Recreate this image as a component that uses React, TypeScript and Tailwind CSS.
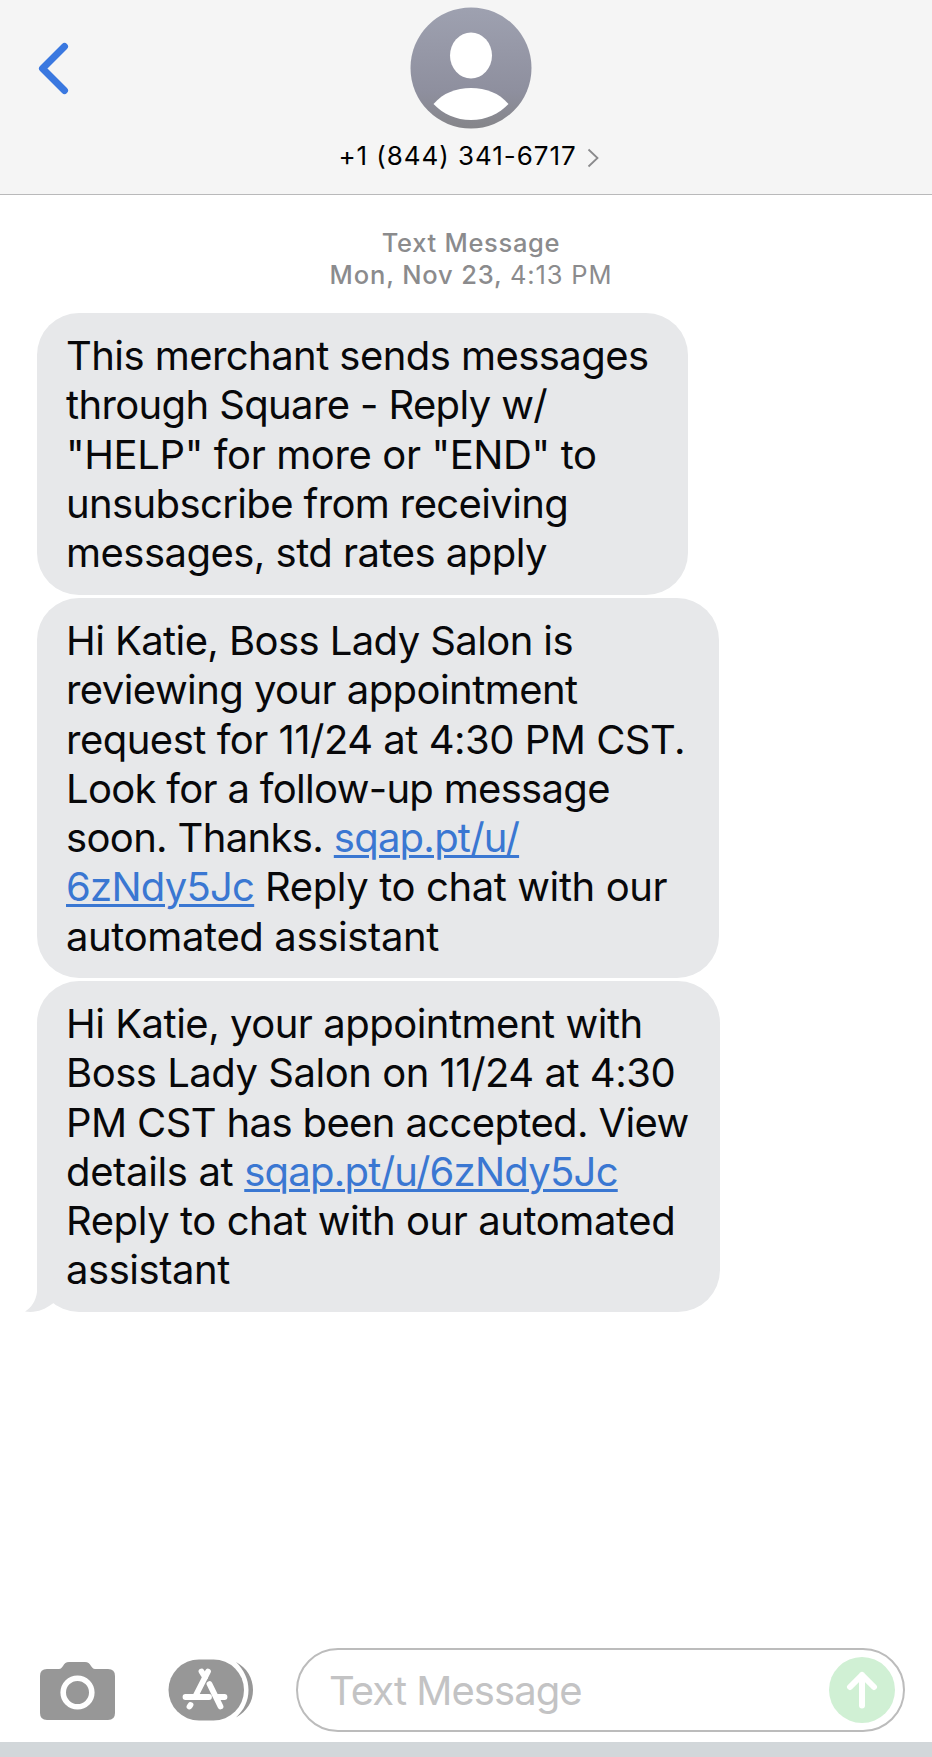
import { ReactNode } from "react";

interface Line {
  tracking: string;
  content: ReactNode;
}

interface Message {
  id: number;
  size: string;
  lines: Line[];
}

function Link({ children }: { children: ReactNode }) {
  return (
    <a className="tracking-[-0.75px] text-[#3a77d2] underline decoration-[2.5px] underline-offset-[3px]">{children}</a>
  );
}

const messages: Message[] = [
  {
    id: 1,
    size: "w-[651px] h-[282px]",
    lines: [
      { tracking: "tracking-[-0.56px]", content: "This merchant sends messages" },
      { tracking: "tracking-[-0.63px]", content: "through Square - Reply w/" },
      { tracking: "tracking-[-0.38px]", content: '"HELP" for more or "END" to' },
      { tracking: "tracking-[-0.62px]", content: "unsubscribe from receiving" },
      { tracking: "tracking-[-0.52px]", content: "messages, std rates apply" },
    ],
  },
  {
    id: 2,
    size: "w-[682px] h-[380px]",
    lines: [
      { tracking: "tracking-[-0.59px]", content: "Hi Katie, Boss Lady Salon is" },
      { tracking: "tracking-[-0.56px]", content: "reviewing your appointment" },
      { tracking: "tracking-[-0.5px]", content: "request for 11/24 at 4:30 PM CST." },
      { tracking: "tracking-[-0.69px]", content: "Look for a follow-up message" },
      { tracking: "tracking-[-0.65px]", content: <>soon. Thanks. <Link>sqap.pt/u/</Link></> },
      { tracking: "tracking-[-0.4px]", content: <><Link>6zNdy5Jc</Link> Reply to chat with our</> },
      { tracking: "tracking-[-0.37px]", content: "automated assistant" },
    ],
  },
  {
    id: 3,
    size: "w-[683px] h-[331px]",
    lines: [
      { tracking: "tracking-[-0.49px]", content: "Hi Katie, your appointment with" },
      { tracking: "tracking-[-0.48px]", content: "Boss Lady Salon on 11/24 at 4:30" },
      { tracking: "tracking-[-0.62px]", content: "PM CST has been accepted. View" },
      { tracking: "tracking-[-0.35px]", content: <>details at <Link>sqap.pt/u/6zNdy5Jc</Link></> },
      { tracking: "tracking-[-0.43px]", content: "Reply to chat with our automated" },
      { tracking: "tracking-[-0.46px]", content: "assistant" },
    ],
  },
];

function Header() {
  return (
    <header className="grid h-[195px] grid-cols-[310px_322px_1fr] border-b border-[#b9b9ba] bg-[#f5f5f5]">
      <svg className="mt-[42px] ml-[38px]" width="32" height="54" viewBox="0 0 32 54" fill="none">
        <path d="M26.500 4.500L4.500 26.500L26.500 48.500" stroke="#3a78e0" strokeWidth="7" strokeLinecap="round" strokeLinejoin="round" />
      </svg>
      <div className="flex flex-col items-center">
        <svg className="mt-[7px] shrink-0" width="122" height="122" viewBox="0 0 122 122">
          <defs>
            <linearGradient id="avatar" x1="0" y1="0" x2="0" y2="1">
              <stop offset="0" stopColor="#9ea1b0" />
              <stop offset="0.7" stopColor="#8e8f9e" />
              <stop offset="1" stopColor="#858589" />
            </linearGradient>
          </defs>
          <circle cx="61" cy="61" r="60.5" fill="url(#avatar)" />
          <ellipse cx="61" cy="48.5" rx="21" ry="23" fill="#fff" />
          <path d="M23.5 97C33 86 46 81 61 81S89 86 98.500 97C89 107 76 113 61 113S33 107 23.500 97Z" fill="#fff" />
        </svg>
        <div className="mt-[11px] flex items-center gap-[10px] pr-[5px]">
          <span className="text-[26px] leading-[32px] tracking-[0.95px] whitespace-nowrap text-black">+1 (844) 341-6717</span>
          <svg className="mt-[3px]" width="12" height="20" viewBox="0 0 12 20" fill="none">
            <path d="M1.500 1.500L10.500 10L1.500 18.500" stroke="#8a8a8c" strokeWidth="1.800" />
          </svg>
        </div>
      </div>
    </header>
  );
}

function Bubble({ message, last }: { message: Message; last: boolean }) {
  return (
    <div className={`relative rounded-[42px] bg-[#e7e8ea] pt-[18px] pl-[29px] ${message.size}`}>
      {message.lines.map((line, i) => (
        <p key={i} className={`h-[49.3px] text-[40px] leading-[49.3px] whitespace-nowrap ${line.tracking}`}>
          {line.content}
        </p>
      ))}
      {last && (
        <svg className="absolute bottom-0 -left-[13px]" width="60" height="50" viewBox="0 0 60 50" fill="#e7e8ea">
          <path d="M13 0V30C12 39 7 46 1 49.500C12 51 20 48 28 42L38 36L24 0Z" />
        </svg>
      )}
    </div>
  );
}

function CameraIcon() {
  return (
    <svg width="75" height="58" viewBox="0 0 75 58">
      <path d="M7 7H19C21 7 22 5.500 23 4C24.500 1.500 26 0 29 0H45C48 0 49.500 1.500 51 4C52 5.500 53 7 55 7H68Q75 7 75 14V51Q75 58 68 58H7Q0 58 0 51V14Q0 7 7 7Z" fill="#979797" />
      <circle cx="37.500" cy="30.500" r="14.300" fill="none" stroke="#fff" strokeWidth="5.600" />
    </svg>
  );
}

function AppsIcon() {
  return (
    <svg width="86" height="62" viewBox="0 0 86 62">
      <rect x="0.500" y="0.500" width="75.500" height="61" rx="30.500" fill="#979797" />
      <path d="M68 3C79 9 85 19 85 31S79 52 68 58.500C76 51 80.500 42 80.500 31S76 11 68 3Z" fill="#979797" />
      <g stroke="#fff" strokeWidth="5.800" strokeLinecap="round" fill="none">
        <path d="M40 12.500L27.500 37" />
        <path d="M33.500 12.500L37 18" />
        <path d="M41.500 25L52.500 47.500" />
        <path d="M17.500 38H41M50 38H56.500" />
        <path d="M22.500 46L21.500 47.500" />
      </g>
    </svg>
  );
}

function Composer() {
  return (
    <div className="flex h-[84px] items-center pl-[40px]">
      <div className="pt-[2px]">
        <CameraIcon />
      </div>
      <div className="ml-[53px]">
        <AppsIcon />
      </div>
      <div className="ml-[42px] flex h-[84px] w-[609px] items-center justify-between rounded-full border-2 border-[#bcbcbc] pr-[8px] pl-[31px]">
        <span className="pt-[2px] text-[40px] leading-[48px] tracking-[-0.95px] whitespace-nowrap text-[#c3c3c4]">Text Message</span>
        <div className="flex size-[66px] items-center justify-center rounded-full bg-[#d0f0d4]">
          <svg width="32" height="38" viewBox="0 0 32 38" fill="none">
            <path d="M16 34.500V4M4 16L16 4L28 16" stroke="#fff" strokeWidth="6" strokeLinecap="round" strokeLinejoin="round" />
          </svg>
        </div>
      </div>
    </div>
  );
}

export default function App() {
  return (
    <div className="flex h-[1757px] w-[932px] flex-col overflow-hidden bg-white font-['Inter',sans-serif] text-[#08080a]">
      <Header />
      <main className="flex-1">
        <div className="mt-[32px] flex flex-col items-center pl-[10px] text-[25.5px] leading-[31.500px] font-medium tracking-[0.7px] text-[#8b8b8d]">
          <p>Text Message</p>
          <p className="tracking-[0.85px]">
            Mon, Nov 23, <span className="font-normal">4:13 PM</span>
          </p>
        </div>
        <div className="mt-[23px] ml-[37px] flex flex-col gap-[3px]">
          {messages.map((message, i) => (
            <Bubble key={message.id} message={message} last={i === messages.length - 1} />
          ))}
        </div>
      </main>
      <Composer />
      <div className="mt-[10px] h-[15px] shrink-0 bg-[#d2d7da]" />
    </div>
  );
}
